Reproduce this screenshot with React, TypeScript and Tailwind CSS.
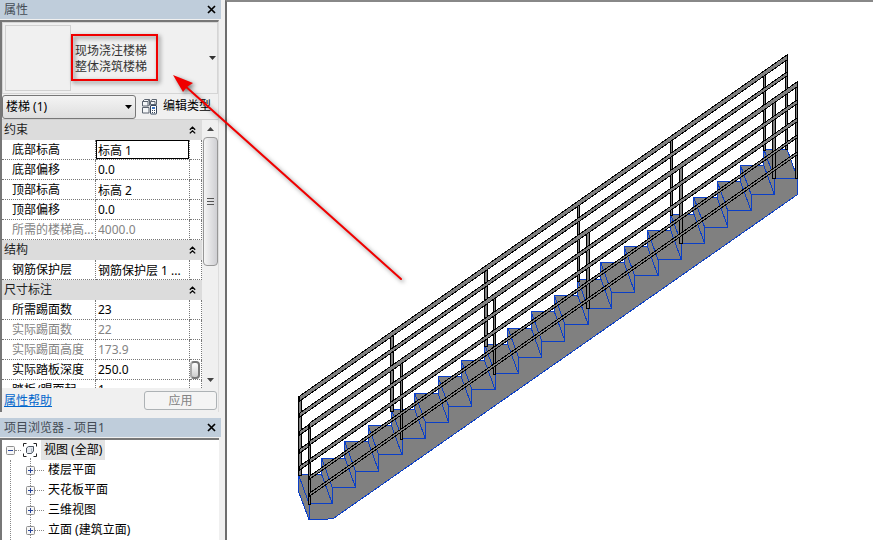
import { useState } from 'react'
import type { ReactNode } from 'react'

type Property = {
  label: string
  value: string
  readOnly?: boolean
}

type Group = {
  title: string
  rows: Property[]
}

const groups: Group[] = [
  {
    title: '约束',
    rows: [
      { label: '底部标高', value: '标高 1' },
      { label: '底部偏移', value: '0.0' },
      { label: '顶部标高', value: '标高 2' },
      { label: '顶部偏移', value: '0.0' },
      { label: '所需的楼梯高...', value: '4000.0', readOnly: true },
    ],
  },
  {
    title: '结构',
    rows: [{ label: '钢筋保护层', value: '钢筋保护层 1 ...' }],
  },
  {
    title: '尺寸标注',
    rows: [
      { label: '所需踢面数', value: '23' },
      { label: '实际踢面数', value: '22', readOnly: true },
      { label: '实际踢面高度', value: '173.9', readOnly: true },
      { label: '实际踏板深度', value: '250.0' },
      { label: '踏板/踢面起', value: '1' },
    ],
  },
]

const views = ['楼层平面', '天花板平面', '三维视图', '立面 (建筑立面)']

function PanelHeader({ title }: { title: string }) {
  return (
    <div className="flex h-[19px] shrink-0 items-center justify-between bg-[#bfcddb] pl-1 pr-[5px] text-[#444c55]">
      <h2>{title}</h2>
      <button type="button" aria-label="关闭" className="text-black">
        <svg width="9" height="9" viewBox="0 0 9 9" className="block" stroke="currentColor" strokeWidth="1.7">
          <path d="M1 1 8 8M8 1 1 8" />
        </svg>
      </button>
    </div>
  )
}

function Chevrons() {
  return (
    <svg width="7" height="8" viewBox="0 0 7 8" fill="none" stroke="#000" strokeWidth="1.3">
      <path d="M.8 3.8 3.5 1.2 6.2 3.8M.8 7.4 3.5 4.8 6.2 7.4" />
    </svg>
  )
}

function TypeIcon() {
  return (
    <svg width="16" height="17" viewBox="0 0 16 17" fill="#f4f6f8" stroke="#5a636e" strokeWidth="1">
      <path d="M.5 3.500 2.500 1.500h5v5.500l-1 1h-6z" />
      <path d="M.5 3.500h5.500v4.500M6 3.500 7.500 1.500" fill="none" />
      <path d="M8.500 3.500 10 1.500h4.500v5h-6z" />
      <path d="M8.500 3.500h4.500v3" fill="none" />
      <path d="M.5 9.500h6.500v5.500h-6.500z" />
      <rect x="8.500" y="7.500" width="6" height="8.500" rx=".5" fill="#fff" stroke="#35465c" />
      <path d="M10 10h3" stroke="#3b75c4" strokeWidth="2" />
      <path d="M10 12.500h3M10 14.500h3" stroke="#35465c" strokeDasharray="1 1" />
    </svg>
  )
}

function ViewsIcon() {
  return (
    <svg width="14" height="14" viewBox="0 0 14 14" fill="none" stroke="#222">
      <path d="M.5 3.500v-3h3M10.500.5h3v3M13.500 10.500v3h-3M3.500 13.500h-3v-3" />
      <path d="M3.500 5 5.500 3.500h5v4.500l-2 2.500h-4l-1-1z" fill="#e6eaf0" stroke="#4b545f" />
      <path d="M8.500 5.500v4.500" stroke="#aab3bf" />
    </svg>
  )
}

function Expander({ open = false }: { open?: boolean }) {
  return (
    <button type="button" aria-label={open ? '折叠' : '展开'} aria-expanded={open} className="relative z-10">
      <svg width="9" height="9" viewBox="0 0 9 9" className="block">
        <rect x=".5" y=".5" width="8" height="8" rx="1" fill="#f6f6f6" stroke="#8f8f8f" />
        <path d={open ? 'M2 4.500h5' : 'M2 4.500h5M4.500 2v5'} stroke="#27449b" />
      </svg>
    </button>
  )
}

function ScrollArrow({ down = false }: { down?: boolean }) {
  return (
    <button type="button" aria-label={down ? '向下滚动' : '向上滚动'} className="flex h-[17px] w-full items-center justify-center">
      <svg width="7" height="4" viewBox="0 0 7 4" fill="#444">
        <path d={down ? 'M0 0h7L3.500 4z' : 'M0 4h7L3.500 0z'} />
      </svg>
    </button>
  )
}

function PropertyTable() {
  return (
    <div className="flex h-[269px] overflow-hidden border-t border-[#d0d0d0]">
      <table className="h-fit w-[200px] shrink-0 table-fixed border-separate border-spacing-0 bg-white">
        <colgroup>
          <col className="w-[94px]" />
          <col className="w-[94px]" />
          <col className="w-[12px]" />
        </colgroup>
        {groups.map((group) => (
          <tbody key={group.title}>
            <tr className="h-5 bg-[#dcdcdc]">
              <th colSpan={3} className="h-5 p-0 text-left font-normal text-[#222]">
                <button type="button" className="flex w-full items-center justify-between pl-[2px] pr-[6px]">
                  {group.title}
                  <Chevrons />
                </button>
              </th>
            </tr>
            {group.rows.map((row) => (
              <PropertyRow key={row.label} row={row} />
            ))}
          </tbody>
        ))}
      </table>
      <div className="ml-px flex w-[15px] flex-col bg-[#f0f0f0]">
        <ScrollArrow />
        <div className="flex h-[129px] w-[15px] flex-col items-center justify-center gap-[2px] rounded-sm border border-[#979797] bg-linear-to-r from-[#f5f5f5] to-[#cfcfd3]">
          <span className="h-px w-[7px] bg-[#555]" />
          <span className="h-px w-[7px] bg-[#555]" />
          <span className="h-px w-[7px] bg-[#555]" />
        </div>
        <div className="grow" />
        <ScrollArrow down />
      </div>
    </div>
  )
}

function PropertyRow({ row }: { row: Property }) {
  const [value, setValue] = useState(row.value)
  const color = row.readOnly ? 'text-[#838383]' : 'text-black'
  const selected = row.label === '底部标高'

  return (
    <tr className={`h-5 ${color}`}>
      <th className="h-5 overflow-hidden border-b border-r border-dotted border-[#777] p-0 pl-[10px] text-left font-normal whitespace-nowrap">
        {row.label}
      </th>
      <td className="h-5 border-b border-r border-dotted border-[#777] p-0">
        <input
          aria-label={row.label}
          value={value}
          readOnly={row.readOnly}
          onChange={(e) => setValue(e.target.value)}
          className={`block h-[19px] w-full border pl-px outline-none ${selected ? 'border-black' : 'border-transparent'}`}
        />
      </td>
      <td className="h-5 border-b border-r border-dotted border-[#777] p-0">
        {row.label === '实际踏板深度' && (
          <button
            type="button"
            aria-label="关联参数"
            className="block h-[18px] w-[10px] rounded-sm border-2 border-[#777] border-l-[#aaa] bg-linear-to-b from-white to-[#ccc]"
          />
        )}
      </td>
    </tr>
  )
}

function PropertiesPanel() {
  return (
    <section className="bg-[#f0f0f0]">
      <PanelHeader title="属性" />
      <div className="mt-px mr-[2px] border-t-2 border-r border-l-2 border-t-[#777] border-r-[#ddd] border-l-[#777]">
        <button type="button" className="flex h-[72px] w-full items-center border border-[#d5d5d5] py-[2px] pl-[2px] pr-px text-left">
          <span className="h-[66px] w-[66px] shrink-0 border border-[#d0d0d0]" />
          <span className="grow pt-[2px] pl-1 leading-4 text-[#333]">
            现场浇注楼梯
            <br />
            整体浇筑楼梯
          </span>
          <svg width="7" height="4" viewBox="0 0 7 4" fill="#333">
            <path d="M0 0h7L3.500 4z" />
          </svg>
        </button>
        <div className="flex h-[25px] items-center">
          <div className="relative w-[134px]">
            <select
              aria-label="选择过滤器"
              className="block h-6 w-full appearance-none rounded-[3px] border border-[#777] bg-linear-to-b from-[#f4f4f4] to-[#dedede] pl-[3px]"
            >
              <option>楼梯 (1)</option>
            </select>
            <svg width="7" height="4" viewBox="0 0 7 4" className="pointer-events-none absolute top-[10px] right-1">
              <path d="M0 0h7L3.500 4z" />
            </svg>
          </div>
          <button type="button" className="flex h-6 items-center gap-[5px] pb-px pl-[6px] whitespace-nowrap">
            <TypeIcon />
            编辑类型
          </button>
        </div>
        <PropertyTable />
        <div className="flex h-[24px] items-center justify-between bg-[#f0f0f0] pr-px pl-[2px]">
          <a href="#help" className="pt-[2px] text-[#0066cc] underline">
            属性帮助
          </a>
          <button type="button" disabled className="h-[19px] w-[73px] rounded-[3px] border border-[#adb2b5] bg-[#f4f4f4] leading-[17px] text-[#838383]">
            应用
          </button>
        </div>
      </div>
    </section>
  )
}

function TreeItem({ children }: { children: ReactNode }) {
  return (
    <li className="flex h-5 items-center">
      <Expander />
      <span className="w-[9px] border-t border-dotted border-[#888]" />
      <span className="pl-1 whitespace-nowrap">{children}</span>
    </li>
  )
}

function ProjectBrowser() {
  return (
    <section className="flex grow flex-col bg-[#f0f0f0]">
      <PanelHeader title="项目浏览器 - 项目1" />
      <div className="mt-px mr-[2px] grow border-t-2 border-l-2 border-[#777] bg-white">
        <div className="flex h-5 items-center pl-1">
          <Expander open />
          <span className="mr-[2px] w-[6px] border-t border-dotted border-[#888]" />
          <ViewsIcon />
          <span className="ml-1 h-5 bg-[#e3e3e3] px-[3px] leading-5">视图 (全部)</span>
        </div>
        <div className="ml-2 border-l border-dotted border-[#888] pl-[15px]">
          <ul className="relative before:absolute before:left-1 before:-top-[2px] before:h-full before:border-l before:border-dotted before:border-[#888]">
            {views.map((view) => (
              <TreeItem key={view}>{view}</TreeItem>
            ))}
          </ul>
        </div>
      </div>
    </section>
  )
}

// stair geometry, in drawing units
const STEPS = 20
const RUN = 23.27
const RISE = 16.27
const RAIL_SLOPE = 0.7

const front = (k: number) => [309 + RUN * k, 503.7 - RISE * k]
const back = (k: number) => [298.4 + RUN * k, 474.5 - RISE * k]

// x, top, bottom, width
const backPosts = [
  [298, 396, 475, 3],
  [390, 333, 411, 3],
  [484, 268, 346, 3],
  [577, 203, 281, 2],
  [670, 138, 215, 2],
  [763, 73, 150, 2],
  [785, 55, 149, 2],
]

const frontPosts = [
  [308, 424, 504, 2],
  [400, 362, 439, 2],
  [493, 297, 374, 2],
  [586, 232, 308, 3],
  [679, 166, 243, 3],
  [772, 101, 178, 3],
  [795, 83, 178, 2],
]

function stairOutline() {
  const points = [[309, 519.5], [298.5, 491.5]]
  for (let k = 0; k <= STEPS; k++) {
    const [x, y] = back(k)
    points.push([x, y], [x + RUN, y])
  }
  points.push([797.5, 178.3], [797.5, 194.5], [334, 518], [325, 519.5])
  return points.map((p) => p.join(',')).join(' ')
}

function Rail({ x, y, end, size }: { x: number; y: number; end: number; size: number }) {
  const endY = y - (end - x) * RAIL_SLOPE
  return (
    <path
      d={`M${x} ${y}L${end} ${endY}v${size}L${x} ${y + size}z`}
      fill="#808080"
      stroke="#000"
    />
  )
}

function Posts({ posts }: { posts: number[][] }) {
  return (
    <>
      {posts.map(([x, top, bottom, width]) => (
        <rect key={x} x={x + 0.5} y={top + 0.5} width={width} height={bottom - top} fill="#808080" stroke="#000" />
      ))}
    </>
  )
}

function StairDrawing() {
  const steps = Array.from({ length: STEPS + 1 }, (_, k) => k)

  return (
    <svg
      width="645"
      height="538"
      viewBox="228 2 645 538"
      role="img"
      aria-label="楼梯三维视图"
      className="block shrink-0"
      shapeRendering="crispEdges"
    >
      <polygon points={stairOutline()} fill="#808080" stroke="#0a3fc8" />
      <g fill="none" stroke="#0a3fc8">
        <path d="M298.500 474.500 309 503.700V519.500" />
        {steps.map((k) => {
          const [fx, fy] = front(k)
          const [bx, by] = back(k)
          return (
            <g key={k}>
              <path d={`M${fx} ${fy}h${RUN}v${k < STEPS ? -RISE : RISE}`} />
              {k > 0 && (
                <path d={`M${bx} ${by + RISE}L${fx} ${fy + RISE}M${bx} ${by + RISE}V${by}L${fx} ${fy}`} />
              )}
            </g>
          )
        })}
      </g>
      <Posts posts={backPosts} />
      <Rail x={299} y={396.5} end={787} size={5} />
      <Rail x={299} y={413.5} end={787} size={4} />
      <Rail x={299} y={431.5} end={309} size={4} />
      <Rail x={299} y={449.5} end={309} size={4} />
      <Rail x={299} y={466.5} end={309} size={4} />
      <Posts posts={frontPosts} />
      <Rail x={309} y={423.5} end={797.5} size={5} />
      <Rail x={309} y={441.5} end={797.5} size={4} />
      <Rail x={309} y={459.5} end={797.5} size={4} />
      <Rail x={309} y={476.5} end={797.5} size={3} />
      <Rail x={309} y={493.5} end={797.5} size={3} />
    </svg>
  )
}

function Annotations() {
  return (
    <svg
      width="410"
      height="290"
      viewBox="0 0 410 290"
      aria-hidden="true"
      className="pointer-events-none absolute top-0 left-0 z-20 drop-shadow-[2px_2px_2px_rgba(0,0,0,0.5)]"
    >
      <rect x="72" y="35" width="85" height="45" fill="none" stroke="#f00000" strokeWidth="2" />
      <path d="M184 85 401 279" stroke="#f00000" strokeWidth="2" strokeLinecap="round" />
      <path d="M173 75 193 83 187 87 183 92z" fill="#f00000" />
    </svg>
  )
}

function App() {
  return (
    <div className="relative flex h-screen overflow-hidden bg-[#f0f0f0] font-['Noto_Sans','Noto_Sans_CJK_SC',sans-serif] text-[12px] leading-[18px] text-black">
      <aside className="flex w-[221px] shrink-0 flex-col">
        <PropertiesPanel />
        <div className="h-[6px] shrink-0" />
        <ProjectBrowser />
      </aside>
      <main className="ml-1 min-w-0 grow overflow-hidden border-t-2 border-l-2 border-t-[#888] border-l-[#6d6d6d] bg-white pl-px">
        <StairDrawing />
      </main>
      <Annotations />
    </div>
  )
}

export default App
